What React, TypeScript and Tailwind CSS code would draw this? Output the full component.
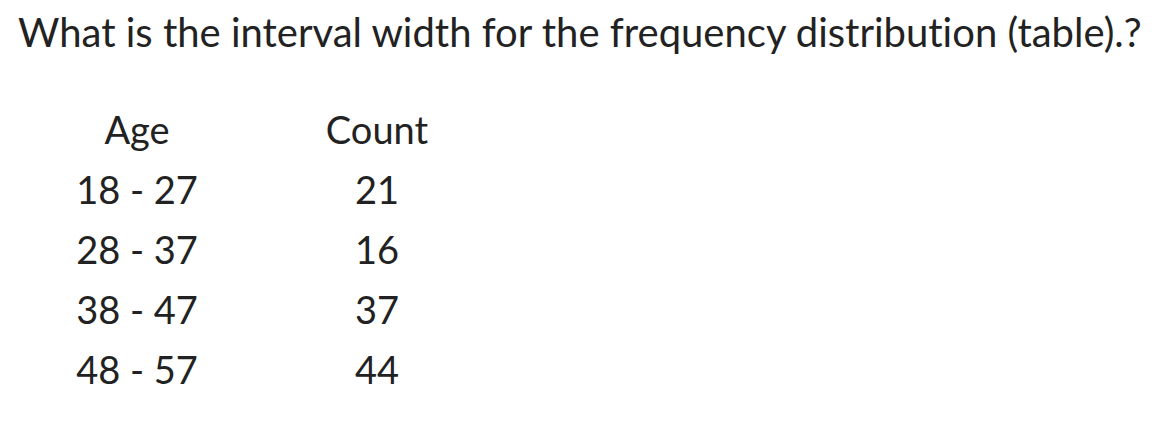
export default function App() {
  const rows = [
    ["18 - 27", "21"],
    ["28 - 37", "16"],
    ["38 - 47", "37"],
    ["48 - 57", "44"],
  ];
  return (
    <div className="w-[1158px] h-[426px] bg-white text-[#222222] font-['Lato',sans-serif] [font-variant-ligatures:none]">
      <div className="pl-[18px] pt-[8px] text-[40px] leading-[48px]">
        What is the interval width for the frequency distribution (table).?
      </div>
      <div className="mt-[43px] ml-[37px] grid grid-cols-[200px_280px] text-[38px] leading-[60px] text-center">
        <div>Age</div>
        <div>Count</div>
        {rows.map(([a, c]) => (
          <>
            <div key={a + "a"}>{a}</div>
            <div key={a + "c"}>{c}</div>
          </>
        ))}
      </div>
    </div>
  );
}
